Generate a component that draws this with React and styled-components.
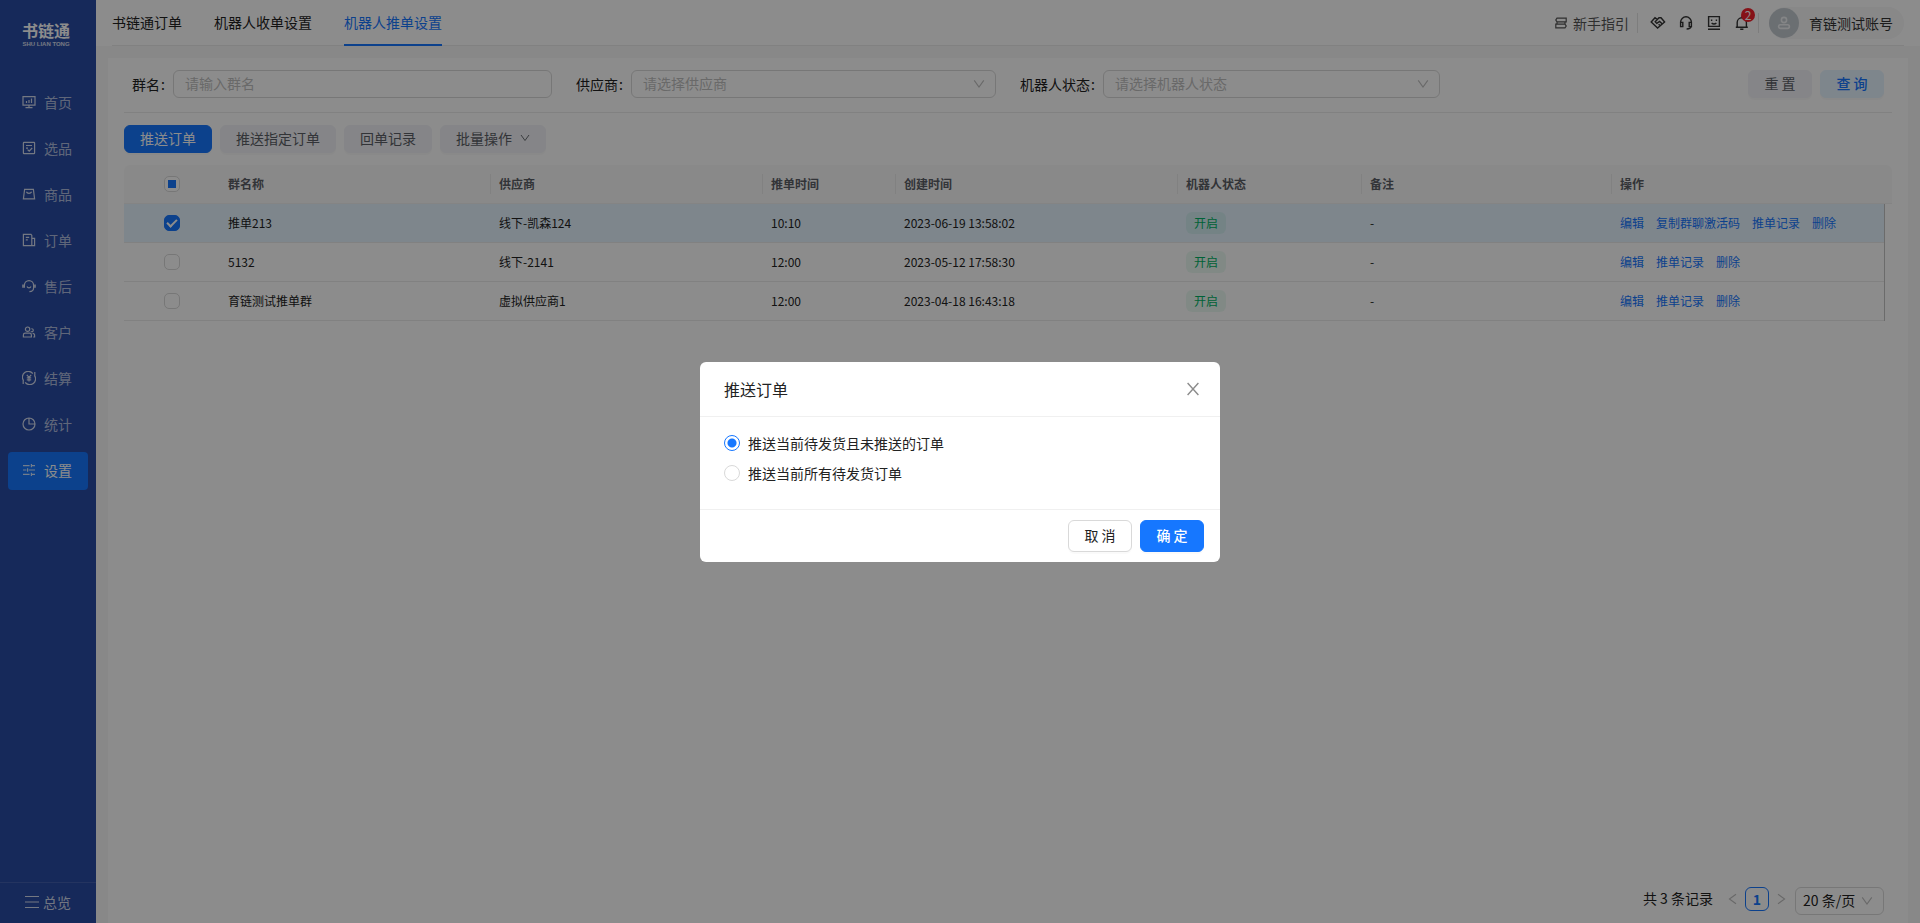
import React, { useEffect, useRef, useState } from 'react';
import styled, { createGlobalStyle } from 'styled-components';

const GlobalStyle = createGlobalStyle`
  *, *::before, *::after {
    box-sizing: border-box;
  }

  body {
    margin: 0;
    font-family: 'Noto Sans CJK SC', sans-serif;
    font-size: 14px;
    line-height: 22px;
    color: #222;
  }

  button, input, select {
    font-family: inherit;
    font-size: 14px;
  }

  a {
    text-decoration: none;
  }
`;

const Layout = styled.div`
  display: flex;
  min-height: 100vh;
  background: #f7f7f8;
`;

/* ---------- sidebar ---------- */

const Sidebar = styled.aside`
  display: flex;
  flex-direction: column;
  flex: none;
  width: 96px;
  background: #284ba5;
`;

const Logo = styled.div`
  display: flex;
  flex-direction: column;
  align-items: center;
  height: 84px;
  padding: 20px 4px 0 0;
  color: #fff;
`;

const LogoName = styled.span`
  font-size: 16px;
  font-weight: 700;
  line-height: 21px;
`;

const LogoLatin = styled.span`
  font-family: 'Liberation Sans', sans-serif;
  font-size: 6px;
  font-weight: 700;
  line-height: 6px;
  opacity: 0.8;
`;

const Menu = styled.nav`
  display: flex;
  flex-direction: column;
  flex: 1;
  gap: 8px;
  padding: 0 8px;
`;

const MenuItem = styled.a`
  display: flex;
  align-items: center;
  gap: 8px;
  height: 38px;
  padding: 0 0 2px 14px;
  border-radius: 4px;
  color: ${(props) => (props.$active ? '#fff' : 'rgba(255, 255, 255, 0.65)')};
  background: ${(props) => (props.$active ? '#1677ff' : 'transparent')};

  svg {
    flex: none;
    color: rgba(255, 255, 255, 0.8);
  }
`;

const Overview = styled.button`
  display: flex;
  align-items: center;
  justify-content: center;
  gap: 4px;
  height: 41px;
  padding: 0 0 2px;
  border: 0;
  border-top: 1px solid rgba(255, 255, 255, 0.12);
  background: transparent;
  color: rgba(255, 255, 255, 0.8);
`;

/* ---------- header ---------- */

const Page = styled.div`
  display: flex;
  flex-direction: column;
  flex: 1;
  min-width: 0;
`;

const Header = styled.header`
  padding: 0 16px;
  background: #fff;
`;

const HeaderInner = styled.div`
  display: flex;
  justify-content: space-between;
  height: 46px;
  box-shadow: inset 0 -1px #ebebeb;
`;

const Tabs = styled.nav`
  display: flex;
  gap: 32px;
`;

const Tab = styled.a`
  height: 46px;
  line-height: 44px;
  border-bottom: 2px solid ${(props) => (props.$active ? '#1677ff' : 'transparent')};
  color: ${(props) => (props.$active ? '#1677ff' : '#222')};
`;

const HeaderTools = styled.div`
  display: flex;
  align-items: center;
`;

const Guide = styled.a`
  display: flex;
  align-items: center;
  gap: 6px;
  color: #555;
`;

const Divider = styled.span`
  width: 1px;
  height: 20px;
  margin: 0 ${(props) => props.$after}px 0 8px;
  background: #e3e3e3;
`;

const ToolList = styled.div`
  display: flex;
  gap: 12px;
`;

const Tool = styled.button`
  position: relative;
  display: flex;
  width: 16px;
  height: 16px;
  padding: 0;
  border: 0;
  background: transparent;
  color: #333;
`;

const Badge = styled.span`
  position: absolute;
  top: -7px;
  left: 7px;
  width: 14px;
  height: 14px;
  border-radius: 7px;
  background: #f5222d;
  color: #fff;
  font-size: 12px;
  line-height: 14px;
  text-align: center;
`;

const Account = styled.button`
  display: flex;
  align-items: center;
  gap: 10px;
  height: 32px;
  padding: 0 11px 0 0;
  border: 0;
  border-radius: 16px;
  background: #f7f7f8;
  color: #333;
`;

const Avatar = styled.span`
  display: flex;
  align-items: center;
  justify-content: center;
  width: 30px;
  height: 30px;
  border-radius: 50%;
  background: #c4cad0;
  color: #f0f2f5;
`;

/* ---------- content ---------- */

const Main = styled.main`
  display: flex;
  flex: 1;
  padding: 12px 12px 0;
`;

const Card = styled.section`
  display: flex;
  flex-direction: column;
  flex: 1;
  min-width: 0;
  padding: 12px 16px 8px;
  background: #fff;
`;

const SearchForm = styled.form`
  display: grid;
  grid-template-columns: repeat(4, 1fr);
  gap: 24px;
  padding: 0 8px 14px;
  border-bottom: 1px solid #ebebeb;
`;

const Field = styled.div`
  display: flex;
  align-items: center;
`;

const Label = styled.label`
  flex: none;

  &::after {
    content: ':';
    margin: 0 8px 0 1px;
  }
`;

const Input = styled.input`
  flex: 1;
  min-width: 0;
  height: 28px;
  padding: 0 11px 2px;
  border: 1px solid #d9d9d9;
  border-radius: 6px;
  background: #fff;
  outline: none;

  &::placeholder {
    color: #bfbfbf;
  }
`;

const SelectBox = styled.div`
  position: relative;
  flex: ${(props) => (props.$compact ? 'none' : 1)};
  min-width: 0;

  svg {
    position: absolute;
    top: 8px;
    right: 11px;
    color: #bfbfbf;
    pointer-events: none;
  }
`;

const Select = styled.select`
  display: block;
  appearance: none;
  width: ${(props) => (props.$compact ? '89px' : '100%')};
  height: 28px;
  padding: 0 ${(props) => (props.$compact ? '7px' : '11px')} 2px;
  border: 1px solid #d9d9d9;
  border-radius: 6px;
  background: #fff;
  color: ${(props) => (props.$compact ? '#222' : '#bfbfbf')};
  outline: none;
`;

const ButtonRow = styled.div`
  display: flex;
  justify-content: ${(props) => (props.$end ? 'flex-end' : 'flex-start')};
  gap: 8px;
`;

const Toolbar = styled(ButtonRow)`
  padding: 12px 0;
`;

const buttonColors = {
  primary: ['#1677ff', '#fff', '#1677ff'],
  soft: ['#e6f4ff', '#1677ff', '#e6f4ff'],
  gray: ['#f2f3f7', '#5c6066', '#f2f3f7'],
  outline: ['#fff', '#222', '#d9d9d9'],
};

const Button = styled.button`
  display: flex;
  align-items: center;
  justify-content: center;
  gap: 8px;
  min-width: 64px;
  height: ${(props) => (props.$large ? 32 : 28)}px;
  padding: 0 15px 2px;
  border: 1px solid ${(props) => buttonColors[props.$kind][2]};
  border-radius: 6px;
  background: ${(props) => buttonColors[props.$kind][0]};
  color: ${(props) => buttonColors[props.$kind][1]};
  font-weight: ${(props) => (props.$strong ? 500 : 400)};
  box-shadow: 0 2px 0 rgba(0, 0, 0, 0.02);
  white-space: nowrap;
`;

/* ---------- table ---------- */

const Table = styled.table`
  width: 100%;
  table-layout: fixed;
  border-collapse: separate;
  border-spacing: 0;
  font-size: 12px;
  line-height: 22px;
`;

const Th = styled.th`
  position: relative;
  height: 39px;
  padding: 0 8px;
  border-bottom: 1px solid #f0f0f0;
  background: #fafafa;
  color: #5c6066;
  font-weight: 700;
  text-align: left;

  &:first-child {
    border-top-left-radius: 6px;
  }

  &:last-child {
    border-top-right-radius: 6px;
  }

  &::after {
    content: '';
    position: absolute;
    top: 9px;
    right: 0;
    width: ${(props) => (props.$divided ? 1 : 0)}px;
    height: 20px;
    background: #ebebeb;
  }
`;

const Td = styled.td`
  height: 39px;
  padding: 0 8px;
  border-bottom: 1px solid #ebebeb;
  background: ${(props) => (props.$selected ? '#e6f4ff' : '#fff')};
  white-space: nowrap;
`;

const Gutter = styled.td`
  padding: 0;
  border-left: 1px solid #c4c4c4;
`;

const Checkbox = styled.input`
  appearance: none;
  display: flex;
  align-items: center;
  justify-content: center;
  width: 16px;
  height: 16px;
  margin: 0 auto;
  border: 1px solid #d9d9d9;
  border-radius: 5px;
  background: #fff;

  &:indeterminate::after {
    content: '';
    width: 8px;
    height: 8px;
    background: #1677ff;
  }

  &:checked {
    border-color: #1677ff;
    background: #1677ff;
  }

  &:checked::after {
    content: '';
    width: 6px;
    height: 10px;
    margin-bottom: 2px;
    border: solid #fff;
    border-width: 0 2px 2px 0;
    transform: rotate(45deg);
  }
`;

const Tag = styled.span`
  display: block;
  width: fit-content;
  padding: 0 8px;
  border-radius: 6px;
  background: rgba(0, 185, 107, 0.08);
  color: #00b365;
`;

const Links = styled.div`
  display: flex;
  gap: 12px;
`;

const Link = styled.a`
  color: #1677ff;
`;

/* ---------- pagination ---------- */

const Pagination = styled.div`
  display: flex;
  justify-content: flex-end;
  align-items: flex-start;
  margin-top: auto;
  padding-right: 8px;
  line-height: 22px;
`;

const PageButton = styled.button`
  display: flex;
  align-items: center;
  justify-content: center;
  width: 24px;
  height: 24px;
  padding: 0;
  border: 1px solid ${(props) => (props.$current ? '#1677ff' : 'transparent')};
  border-radius: 6px;
  background: transparent;
  color: ${(props) => (props.$current ? '#1677ff' : '#bfbfbf')};
  font-weight: 700;
`;

const Total = styled.span`
  margin-right: 8px;
`;

const PageSize = styled.div`
  margin-left: 2px;
`;

/* ---------- modal ---------- */

const Mask = styled.div`
  position: fixed;
  inset: 0;
  display: flex;
  align-items: center;
  justify-content: center;
  background: rgba(0, 0, 0, 0.45);
`;

const Dialog = styled.div`
  width: 520px;
  border-radius: 6px;
  background: #fff;
`;

const DialogHeader = styled.div`
  display: flex;
  align-items: center;
  justify-content: space-between;
  height: 55px;
  padding: 0 19px 0 24px;
  border-bottom: 1px solid #f0f0f0;
`;

const DialogTitle = styled.h2`
  margin: 0;
  font-size: 16px;
  font-weight: 400;
`;

const CloseButton = styled.button`
  display: flex;
  padding: 0;
  border: 0;
  background: transparent;
  color: #8c8c8c;
`;

const DialogBody = styled.div`
  display: flex;
  flex-direction: column;
  gap: 8px;
  padding: 15px 24px 25px;
`;

const RadioLabel = styled.label`
  display: flex;
  align-items: center;
  gap: 8px;
`;

const Radio = styled.input`
  appearance: none;
  width: 16px;
  height: 16px;
  margin: 0;
  border: 1px solid #d9d9d9;
  border-radius: 50%;
  background: #fff;

  &:checked {
    border-color: #1677ff;
    background: radial-gradient(#1677ff 4px, #fff 5px);
  }
`;

const DialogFooter = styled(ButtonRow)`
  padding: 10px 16px;
  border-top: 1px solid #f0f0f0;
`;

/* ---------- icons ---------- */

const Svg = ({ size = 14, box = size, stroke = 1.2, children }) => (
  <svg
    width={size}
    height={size}
    viewBox={`0 0 ${box} ${box}`}
    fill="none"
    stroke="currentColor"
    strokeWidth={stroke}
    aria-hidden="true"
  >
    {children}
  </svg>
);

const HomeIcon = () => (
  <Svg>
    <path d="M1 1.6h12v8.6H1zM3.5 12.6h7M7 10.2v2.4M4.5 8V6M7 8V5M9.5 8V3.6" />
  </Svg>
);

const PickIcon = () => (
  <Svg>
    <rect x="1.4" y="1.4" width="11.2" height="11.2" rx="0.6" />
    <path d="M4 4.5h6M4 7.2h2M5.6 8.6l1.6 1.6 3-3.2" />
  </Svg>
);

const GoodsIcon = () => (
  <Svg>
    <path d="M2.6 2.4h8.8l1.2 9.4H1.4zM4.4 4.8c.8 2 4.4 2 5.200 0" />
  </Svg>
);

const OrderIcon = () => (
  <Svg>
    <path d="M1.4 1.4H9l.8 1v10.2H1.4zM9.800 5.400h2.800v7.200H9.800M3.800 4.400h3.400M3.800 6.800h2" />
  </Svg>
);

const ServiceIcon = () => (
  <Svg>
    <path d="M2.4 8.800V6.200a4.600 4.600 0 0 1 9.200 0v2.600c0 2.400-1.600 3.800-4.200 3.800M5 7.600c.8 1.600 3.200 1.600 4 0" />
    <path d="M1 5.4v3.4M13 5.4v3.4" strokeWidth="1.6" />
  </Svg>
);

const CustomerIcon = () => (
  <Svg>
    <circle cx="5.6" cy="4.200" r="2.2" />
    <path d="M1.4 12v-2c0-1 .8-1.800 1.800-1.800h4.400c1 0 1.800.8 1.800 1.800v2zM8.800 6.400a1.500 1.500 0 1 0 .6-2.600M10.600 8.400c1.400 0 2 .8 2 2V12h-1.400" />
  </Svg>
);

const SettleIcon = () => (
  <Svg>
    <path d="M1.600 9.600A5.600 5.600 0 0 1 10.800 2.600M12.400 4.400a5.600 5.600 0 0 1-9.200 7M12.800 1v3.600M1.200 9.400V13" />
    <path d="M4.800 3.800L7 6.400l2.200-2.600M7 6.400v4.200M4.800 6.800h4.400M4.800 8.800h4.400" />
  </Svg>
);

const StatsIcon = () => (
  <Svg>
    <circle cx="7" cy="7" r="6" />
    <path d="M7 1v6h6" />
  </Svg>
);

const SettingIcon = () => (
  <Svg>
    <path d="M1 2.600h6.600M10 2.600h3M1 7h3.400M6.800 7H13M1 11.400h6.600M10 11.400h3M9.400 1v3.200M5.600 5.200v3.600M9.400 9.800V13" />
  </Svg>
);

const MenuIcon = () => (
  <Svg>
    <path d="M0 1.5h14M0 7h14M0 12.5h14" />
  </Svg>
);

const GuideIcon = () => (
  <Svg size={12}>
    <path d="M2 1.2h9.200v3.600H2L.8 3zM2 4.800v2.400M.8 7.200H10L11.200 9 10 10.800H.8zM10 4.800v2.400" />
  </Svg>
);

const HandshakeIcon = () => (
  <Svg size={16} stroke={1.4}>
    <path d="M7.600 4.600L5 2.800 1.200 7l6.400 6 7-6L11 2.800H9L5.200 6.800l1.600 1.600 2.800-2 2.800 2.600M8.600 9.200l1.800 1.600" />
  </Svg>
);

const HeadsetIcon = () => (
  <Svg size={16} stroke={1.4}>
    <path d="M2.600 10V7.200a5.400 5.400 0 0 1 10.800 0V10M2.600 7.400h2.200v4.200H2.600zM11.200 7.400h2.200v4.200h-2.200zM13 11.600c0 1.600-1.600 2.400-4.400 2.400" />
  </Svg>
);

const RobotIcon = () => (
  <Svg size={16} stroke={1.4}>
    <path d="M2.600 1.600h10.800v9.800H2.600zM2 14.200h12M5.600 4.400v1.600M10.400 4.400v1.600M5.600 8.200c1.200.8 3.600.8 4.800 0" />
  </Svg>
);

const BellIcon = () => (
  <Svg size={16} stroke={1.4}>
    <path d="M3.200 12.200V7.400a4.600 4.600 0 0 1 9.200 0v4.800M1.800 12.200h12M6.200 14.200h3.200M7.800 1.200v1.600" />
  </Svg>
);

const UserIcon = () => (
  <Svg stroke={1.6}>
    <circle cx="7" cy="4" r="2.6" />
    <rect x="1.6" y="8.8" width="10.8" height="3.6" rx="1.8" />
  </Svg>
);

const DownIcon = ({ size = 12 }) => (
  <Svg size={size} box={12} stroke={1.1}>
    <path d="M1.200 2.400L6 9l4.800-6.600" />
  </Svg>
);

const LeftIcon = () => (
  <Svg size={12} stroke={1.1}>
    <path d="M9 1.200L2.400 6 9 10.800" />
  </Svg>
);

const RightIcon = () => (
  <Svg size={12} stroke={1.1}>
    <path d="M3 1.200L9.600 6 3 10.800" />
  </Svg>
);

const CloseIcon = () => (
  <Svg size={16} stroke={1.4}>
    <path d="M2.600 2l10.800 12M13.400 2L2.600 14" />
  </Svg>
);

/* ---------- data ---------- */

const menu = [
  { name: '首页', icon: HomeIcon },
  { name: '选品', icon: PickIcon },
  { name: '商品', icon: GoodsIcon },
  { name: '订单', icon: OrderIcon },
  { name: '售后', icon: ServiceIcon },
  { name: '客户', icon: CustomerIcon },
  { name: '结算', icon: SettleIcon },
  { name: '统计', icon: StatsIcon },
  { name: '设置', icon: SettingIcon, active: true },
];

const tabs = ['书链通订单', '机器人收单设置', '机器人推单设置'];

const columns = ['群名称', '供应商', '推单时间', '创建时间', '机器人状态', '备注', '操作'];

const rows = [
  {
    id: 1,
    name: '推单213',
    supplier: '线下-凯森124',
    time: '10:10',
    created: '2023-06-19 13:58:02',
    actions: ['编辑', '复制群聊激活码', '推单记录', '删除'],
  },
  {
    id: 2,
    name: '5132',
    supplier: '线下-2141',
    time: '12:00',
    created: '2023-05-12 17:58:30',
    actions: ['编辑', '推单记录', '删除'],
  },
  {
    id: 3,
    name: '育链测试推单群',
    supplier: '虚拟供应商1',
    time: '12:00',
    created: '2023-04-18 16:43:18',
    actions: ['编辑', '推单记录', '删除'],
  },
];

const SelectField = ({ id, label, placeholder }) => (
  <Field>
    <Label htmlFor={id}>{label}</Label>
    <SelectBox>
      <Select id={id}>
        <option>{placeholder}</option>
      </Select>
      <DownIcon />
    </SelectBox>
  </Field>
);

const GroupTable = () => {
  const [selected, setSelected] = useState([1]);
  const allRef = useRef(null);
  const all = selected.length === rows.length;

  useEffect(() => {
    allRef.current.indeterminate = selected.length > 0 && !all;
  }, [selected, all]);

  const toggle = (id) => {
    if (selected.includes(id)) {
      setSelected(selected.filter((item) => item !== id));
    } else {
      setSelected([...selected, id]);
    }
  };

  return (
    <Table>
      <colgroup>
        <col width="96" />
        <col width="271" />
        <col width="272" />
        <col width="133" />
        <col width="282" />
        <col width="184" />
        <col />
        <col width="272" />
        <col width="8" />
      </colgroup>
      <thead>
        <tr>
          <Th>
            <Checkbox
              type="checkbox"
              ref={allRef}
              checked={all}
              aria-label="全选"
              onChange={() => setSelected(all ? [] : rows.map((row) => row.id))}
            />
          </Th>
          {columns.map((name, i) => (
            <Th key={name} $divided={i < columns.length - 1}>
              {name}
            </Th>
          ))}
          <Th />
        </tr>
      </thead>
      <tbody>
        {rows.map((row) => {
          const on = selected.includes(row.id);
          return (
            <tr key={row.id}>
              <Td $selected={on}>
                <Checkbox
                  type="checkbox"
                  checked={on}
                  aria-label={row.name}
                  onChange={() => toggle(row.id)}
                />
              </Td>
              <Td $selected={on}>{row.name}</Td>
              <Td $selected={on}>{row.supplier}</Td>
              <Td $selected={on}>{row.time}</Td>
              <Td $selected={on}>{row.created}</Td>
              <Td $selected={on}>
                <Tag>开启</Tag>
              </Td>
              <Td $selected={on}>-</Td>
              <Td $selected={on}>
                <Links>
                  {row.actions.map((action) => (
                    <Link key={action} href="#">
                      {action}
                    </Link>
                  ))}
                </Links>
              </Td>
              <Gutter />
            </tr>
          );
        })}
      </tbody>
    </Table>
  );
};

const PushModal = ({ close }) => {
  const [mode, setMode] = useState('pending');

  return (
    <Mask>
      <Dialog role="dialog" aria-modal="true" aria-labelledby="push-title">
        <DialogHeader>
          <DialogTitle id="push-title">推送订单</DialogTitle>
          <CloseButton aria-label="关闭" onClick={close}>
            <CloseIcon />
          </CloseButton>
        </DialogHeader>
        <DialogBody>
          <RadioLabel>
            <Radio
              type="radio"
              name="mode"
              checked={mode === 'pending'}
              onChange={() => setMode('pending')}
            />
            推送当前待发货且未推送的订单
          </RadioLabel>
          <RadioLabel>
            <Radio
              type="radio"
              name="mode"
              checked={mode === 'all'}
              onChange={() => setMode('all')}
            />
            推送当前所有待发货订单
          </RadioLabel>
        </DialogBody>
        <DialogFooter $end>
          <Button $kind="outline" $large onClick={close}>
            取 消
          </Button>
          <Button $kind="primary" $large $strong onClick={close}>
            确 定
          </Button>
        </DialogFooter>
      </Dialog>
    </Mask>
  );
};

const App = () => {
  const [open, setOpen] = useState(true);

  return (
    <>
      <GlobalStyle />
      <Layout>
        <Sidebar>
          <Logo>
            <LogoName>书链通</LogoName>
            <LogoLatin>SHU LIAN TONG</LogoLatin>
          </Logo>
          <Menu>
            {menu.map(({ name, icon: Icon, active }) => (
              <MenuItem key={name} href="#" $active={active}>
                <Icon />
                {name}
              </MenuItem>
            ))}
          </Menu>
          <Overview>
            <MenuIcon />
            总览
          </Overview>
        </Sidebar>

        <Page>
          <Header>
            <HeaderInner>
              <Tabs>
                {tabs.map((name) => (
                  <Tab key={name} href="#" $active={name === '机器人推单设置'}>
                    {name}
                  </Tab>
                ))}
              </Tabs>
              <HeaderTools>
                <Guide href="#">
                  <GuideIcon />
                  新手指引
                </Guide>
                <Divider $after={12} />
                <ToolList>
                  <Tool aria-label="合作">
                    <HandshakeIcon />
                  </Tool>
                  <Tool aria-label="客服">
                    <HeadsetIcon />
                  </Tool>
                  <Tool aria-label="机器人">
                    <RobotIcon />
                  </Tool>
                  <Tool aria-label="消息">
                    <BellIcon />
                    <Badge>2</Badge>
                  </Tool>
                </ToolList>
                <Divider $after={10} />
                <Account>
                  <Avatar>
                    <UserIcon />
                  </Avatar>
                  育链测试账号
                </Account>
              </HeaderTools>
            </HeaderInner>
          </Header>

          <Main>
            <Card>
              <SearchForm onSubmit={(e) => e.preventDefault()}>
                <Field>
                  <Label htmlFor="group">群名</Label>
                  <Input id="group" placeholder="请输入群名" />
                </Field>
                <SelectField id="supplier" label="供应商" placeholder="请选择供应商" />
                <SelectField id="status" label="机器人状态" placeholder="请选择机器人状态" />
                <ButtonRow $end>
                  <Button type="reset" $kind="gray">
                    重 置
                  </Button>
                  <Button type="submit" $kind="soft" $strong>
                    查 询
                  </Button>
                </ButtonRow>
              </SearchForm>

              <Toolbar>
                <Button $kind="primary" onClick={() => setOpen(true)}>
                  推送订单
                </Button>
                <Button $kind="gray">推送指定订单</Button>
                <Button $kind="gray">回单记录</Button>
                <Button $kind="gray">
                  批量操作
                  <DownIcon size={10} />
                </Button>
              </Toolbar>

              <GroupTable />

              <Pagination>
                <Total>共 3 条记录</Total>
                <PageButton aria-label="上一页">
                  <LeftIcon />
                </PageButton>
                <PageButton $current>1</PageButton>
                <PageButton aria-label="下一页">
                  <RightIcon />
                </PageButton>
                <PageSize>
                  <SelectBox $compact>
                    <Select $compact aria-label="每页条数">
                      <option>20 条/页</option>
                    </Select>
                    <DownIcon />
                  </SelectBox>
                </PageSize>
              </Pagination>
            </Card>
          </Main>
        </Page>
      </Layout>
      {open && <PushModal close={() => setOpen(false)} />}
    </>
  );
};

export default App;
